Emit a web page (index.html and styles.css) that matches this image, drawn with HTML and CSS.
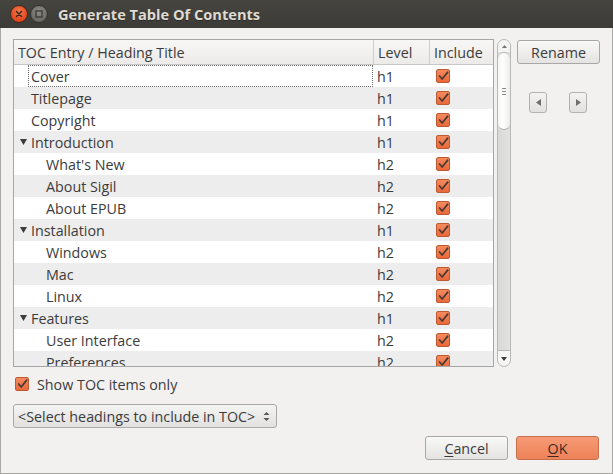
FILE: index.html
```html
<!DOCTYPE html>
<html>
<head>
<meta charset="utf-8">
<link rel="stylesheet" href="styles.css">
</head>
<body>
<div class="window">
  <div class="titlebar">
    <div class="wbtn close"><svg width="16" height="16" viewBox="0 0 16 16"><path d="M5.5 5.5 L10.5 10.5 M10.5 5.5 L5.5 10.5" stroke="#3a2a22" stroke-width="1.5" stroke-linecap="round"/></svg></div>
    <div class="wbtn maxi"><svg width="16" height="16" viewBox="0 0 16 16"><rect x="5" y="5" width="6" height="6" fill="none" stroke="#3a3935" stroke-width="1.3"/></svg></div>
    <div class="title">Generate Table Of Contents</div>
  </div>
  <div class="content">
    <div class="main-row">
      <div class="table">
        <div class="thead">
          <div class="c1">TOC Entry / Heading Title</div>
          <div class="c2">Level</div>
          <div class="c3">Include</div>
        </div>
        <div class="tbody" id="tbody"></div>
      </div>
      <div class="scrollbar">
        <div class="sb-up"><svg width="5" height="3" viewBox="0 0 5 3"><path d="M0 3 L2.5 0 L5 3Z" fill="#777"/></svg></div>
        <div class="sb-slider"><div class="grip"></div><div class="grip"></div><div class="grip"></div></div>
        <div class="sb-trough"></div>
        <div class="sb-down"><svg width="6" height="4" viewBox="0 0 6 4"><path d="M0 0 L6 0 L3 4Z" fill="#3c3c3c"/></svg></div>
      </div>
      <div class="side">
        <button class="btn rename">Rename</button>
        <div class="arrows">
          <button class="abtn"><svg width="5" height="7" viewBox="0 0 5 7"><path d="M5 0 L5 7 L0 3.5Z" fill="#6f6f6f"/></svg></button>
          <button class="abtn"><svg width="5" height="7" viewBox="0 0 5 7"><path d="M0 0 L0 7 L5 3.5Z" fill="#6f6f6f"/></svg></button>
        </div>
      </div>
    </div>
    <div class="showrow">
      <span class="cb big"><svg width="14" height="14" viewBox="0 0 14 14"><path d="M3 7 L6 10.5 L12.5 2.5" fill="none" stroke="#4b3a33" stroke-width="2" stroke-linecap="round" stroke-linejoin="round"/></svg></span>
      <span class="label">Show TOC items only</span>
    </div>
    <div class="combo">
      <span>&lt;Select headings to include in TOC&gt;</span>
      <svg width="7" height="11" viewBox="0 0 7 11"><path d="M0.5 4 L3.5 1 L6.5 4Z M0.5 7 L3.5 10 L6.5 7Z" fill="#555"/></svg>
    </div>
    <div class="buttons">
      <button class="btn cancel"><u>C</u>ancel</button>
      <button class="btn ok"><u>O</u>K</button>
    </div>
  </div>
</div>
<script src="app.js"></script>
</body>
</html>
```
FILE: app.js
```js
const rows = [
  ["Cover", 1, "h1", 0],
  ["Titlepage", 1, "h1", 0],
  ["Copyright", 1, "h1", 0],
  ["Introduction", 1, "h1", 1],
  ["What's New", 2, "h2", 0],
  ["About Sigil", 2, "h2", 0],
  ["About EPUB", 2, "h2", 0],
  ["Installation", 1, "h1", 1],
  ["Windows", 2, "h2", 0],
  ["Mac", 2, "h2", 0],
  ["Linux", 2, "h2", 0],
  ["Features", 1, "h1", 1],
  ["User Interface", 2, "h2", 0],
  ["Preferences", 2, "h2", 0]
];
const check = '<span class="cb"><svg width="14" height="14" viewBox="0 0 14 14"><path d="M3 7 L6 10.5 L12.5 2.5" fill="none" stroke="#4b3a33" stroke-width="2" stroke-linecap="round" stroke-linejoin="round"/></svg></span>';
const tri = '<svg class="tri" width="7" height="6" viewBox="0 0 7 6"><path d="M0 0 L7 0 L3.5 6Z" fill="#3c3c3c"/></svg>';
const tb = document.getElementById("tbody");
rows.forEach((r, i) => {
  const d = document.createElement("div");
  d.className = "tr" + (i % 2 ? " alt" : "") + (i === 0 ? " focus" : "");
  d.innerHTML =
    '<div class="c1 lvl' + r[1] + '">' + (r[3] ? tri : '') + '<span class="txt">' + r[0] + '</span></div>' +
    '<div class="c2">' + r[2] + '</div>' +
    '<div class="c3">' + check + '</div>';
  tb.appendChild(d);
});
```
FILE: styles.css
```css
* { box-sizing: border-box; }
html, body { margin: 0; padding: 0; }
body {
  width: 613px; height: 474px; overflow: hidden;
  font-family: "Open Sans", "Noto Sans", sans-serif;
  font-size: 14.3px; color: #3c3c3c;
  background: #f2f1f0;
}
.window {
  width: 613px; height: 474px;
  display: flex; flex-direction: column;
  background: #f2f1f0;
  border-left: 1px solid #a9a8a5;
  border-right: 1px solid #a9a8a5;
  border-bottom: 1px solid #a9a8a5;
}
.titlebar {
  height: 28px; flex: none;
  background: linear-gradient(#45443f, #3c3b37);
  display: flex; align-items: center;
  padding-left: 10px;
  margin: 0 -1px;
}
.wbtn {
  width: 18px; height: 18px; border-radius: 50%;
  display: flex; align-items: center; justify-content: center;
  margin-right: 2px;
}
.close { background: radial-gradient(circle at 50% 35%, #f57a4e, #e2461b 70%); border: 1px solid #3a2a22; }
.maxi { background: radial-gradient(circle at 50% 35%, #8e8c86, #6b6a65 70%); border: 1px solid #33322e; }
.title {
  margin-left: 8px;
  color: #dfdbd2; font-weight: bold; font-size: 14.6px;
  text-shadow: 0 1px 0 #2b2a27;
}
.content {
  flex: 1;
  padding: 11px 12px 0 12px;
  display: flex; flex-direction: column;
}
.main-row { display: flex; height: 328px; }
.table {
  width: 481px; height: 328px;
  border: 1px solid #a7a6a4;
  background: #fff;
  overflow: hidden;
  display: flex; flex-direction: column;
}
.thead {
  height: 25px; flex: none;
  display: flex;
  background: linear-gradient(#f7f7f6, #ecebea);
  border-bottom: 1px solid #c8c7c5;
}
.thead > div { display: flex; align-items: center; padding-left: 4px; }
.thead .c2, .thead .c3 { border-left: 1px solid #cfcecc; }
.c1 { width: 359px; flex: none; }
.c2 { width: 56px; flex: none; }
.c3 { flex: 1; }
.tr { height: 22px; display: flex; align-items: center; }
.tr.alt { background: #eeeded; }
.tr .c1 { height: 22px; display: flex; align-items: center; position: relative; }
.tr .c2 { padding-left: 4px; }
.tr .c3 { padding-left: 7px; display: flex; align-items: center; }
.lvl1 .txt { margin-left: 17px; }
.lvl2 .txt { margin-left: 32px; }
.tri { position: absolute; left: 6px; top: 8px; }
.tr.focus .c1::after {
  content: ""; position: absolute; left: 14px; right: 0; top: 0; bottom: 0;
  border: 1px dotted #6a6a6a;
}
.cb {
  width: 14px; height: 14px; display: inline-flex; align-items: center; justify-content: center;
  border-radius: 2px;
  background: linear-gradient(#f58a5f, #e8693a);
  border: 1px solid #bd5a32;
}
.cb svg { display: block; }
.scrollbar {
  width: 14px; margin-left: 3px; height: 328px;
  display: flex; flex-direction: column; align-items: stretch;
  border: 1px solid #b9b8b6; border-radius: 7px;
  background: #dededd;
  overflow: hidden;
}
.sb-up { height: 12px; flex: none; background: #f4f4f3; display: flex; justify-content: center; align-items: center; }
.sb-slider {
  height: 78px; flex: none;
  background: linear-gradient(90deg, #f5f5f4, #ffffff 40%, #ececeb);
  border-top: 1px solid #b4b3b1; border-bottom: 1px solid #b4b3b1;
  border-radius: 6px;
  display: flex; flex-direction: column; justify-content: center; align-items: center; gap: 2px;
}
.grip { width: 4px; height: 1px; background: #8a8a8a; }
.sb-trough { flex: 1; background: linear-gradient(90deg, #d9d9d8, #e2e2e1); }
.sb-down { height: 16px; flex: none; background: #f7f7f6; border-top: 1px solid #b9b8b6; border-radius: 0 0 6px 6px; display: flex; justify-content: center; align-items: center; }
.side { margin-left: 6px; width: 83px; display: flex; flex-direction: column; padding-top: 1px; }
.btn {
  font-family: inherit; font-size: 14.3px; color: #3c3c3c;
  height: 24px; width: 83px;
  border: 1px solid #a9a8a6; border-radius: 3px;
  background: linear-gradient(#f9f9f8, #e4e3e1);
  padding: 0;
}
.btn u { text-decoration: underline; text-underline-offset: 2px; }
.arrows { display: flex; justify-content: space-between; padding: 0 13px 0 12px; margin-top: 28px; }
.abtn {
  width: 18px; height: 21px; padding: 0;
  border: 1px solid #b3b2b0; border-radius: 3px;
  background: linear-gradient(#f3f3f2, #e2e1df);
  display: flex; align-items: center; justify-content: center;
}
.showrow { display: flex; align-items: center; margin-top: 9px; height: 16px; padding-left: 2px; }
.showrow .label { margin-left: 8px; }
.combo {
  margin-top: 12px; width: 264px; height: 24px;
  border: 1px solid #aaa9a7; border-radius: 3px;
  background: linear-gradient(#f4f4f3, #e2e1df);
  display: flex; align-items: center; justify-content: space-between;
  padding: 0 6px 0 4px;
  white-space: nowrap;
}
.buttons { display: flex; justify-content: flex-end; gap: 8px; margin-top: 8px; padding-right: 1px; }
.ok { background: linear-gradient(#f59a75, #ee8258); border-color: #c5704d; color: #3c2a22; }
```
